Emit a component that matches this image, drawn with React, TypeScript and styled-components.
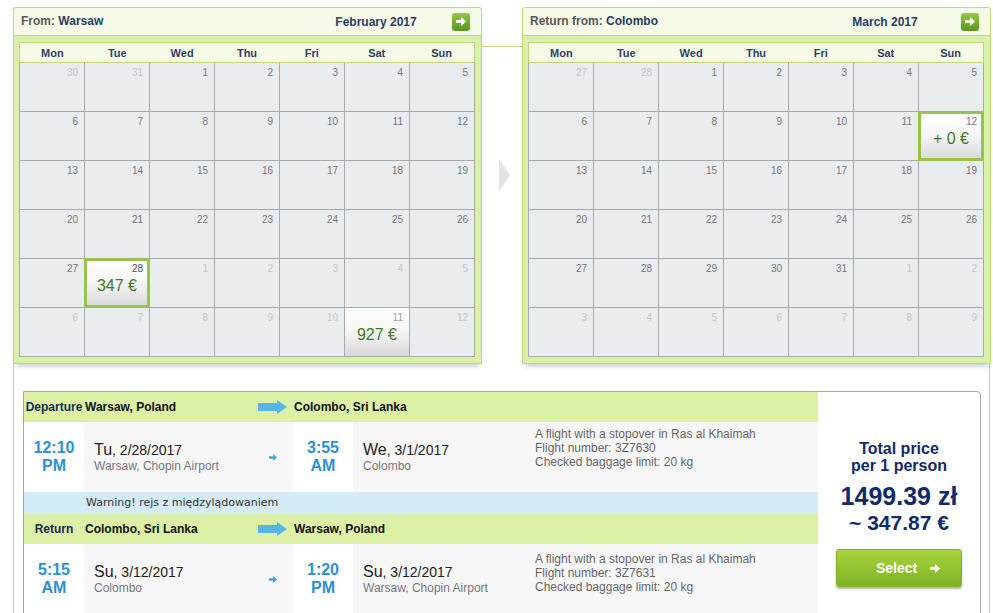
import React from 'react';
import styled, { createGlobalStyle } from 'styled-components';

const GlobalStyle = createGlobalStyle`
  html, body { margin: 0; padding: 0; background: #fff; }
  body { font-family: "Liberation Sans", Arial, sans-serif; overflow: hidden; }
  * { box-sizing: border-box; }
`;

const GREEN_LINE = '#bcd97d';
const NAVY = '#112a6b';

const Page = styled.div`
  width: 993px;
  height: 613px;
  overflow: hidden;
  padding-top: 7px;
`;

const CalendarsRow = styled.div`
  display: flex;
  padding-left: 13px;
  position: relative;
  z-index: 1;
`;

const Calendar = styled.section`
  width: 469px;
  border: 1px solid ${GREEN_LINE};
  border-radius: 3px 3px 0 0;
  background: #dcf1a8;
  box-shadow: 0 5px 5px -3px rgba(0, 0, 0, 0.22);
`;

const CalHeader = styled.header`
  height: 28px;
  display: flex;
  align-items: center;
  padding: 0 11px 0 7px;
  background: #f6fbe8;
  border-bottom: 1px solid ${GREEN_LINE};
  border-radius: 3px 3px 0 0;
  font-size: 12px;
  font-weight: bold;
`;

const CalTitle = styled.div`
  flex: 1;
  color: #585858;
  margin-top: -2px;
`;

const CalCity = styled.span`
  color: #2b3b63;
`;

const CalMonth = styled.div`
  width: 100px;
  margin-right: 26px;
  text-align: center;
  color: #2b3b63;
  margin-top: 1px;
`;

const NextButton = styled.div`
  width: 18px;
  height: 18px;
  border-radius: 3px;
  background: linear-gradient(#94c944, #5a961f);
  display: flex;
  align-items: center;
  justify-content: center;
`;

const CalBody = styled.div`
  padding: 6px 6px 6px 5px;
`;

const Weekdays = styled.div`
  display: grid;
  grid-template-columns: repeat(7, 1fr);
  width: 456px;
  height: 21px;
  border: 1px solid ${GREEN_LINE};
  background: #f5fbe6;
  align-items: center;
`;

const Weekday = styled.div`
  text-align: center;
  font-size: 11px;
  font-weight: bold;
  color: #2e3f66;
`;

const Grid = styled.div`
  display: grid;
  grid-template-columns: repeat(7, 65px);
  border-left: 1px solid #a9a9a9;
  background: #eaedf0;
`;

const DayCell = styled.div<{ $price?: boolean; $selected?: boolean }>`
  position: relative;
  height: 49px;
  border-right: 1px solid #a9a9a9;
  border-bottom: 1px solid #a9a9a9;
  display: flex;
  flex-direction: column;
  background: ${(p) => (p.$price ? 'linear-gradient(#ffffff 0%, #f7f7f7 45%, #d9d9d9 100%)' : 'transparent')};
  ${(p) =>
    p.$selected &&
    `&::after {
      content: '';
      position: absolute;
      top: -1px; left: -1px; right: -1px; bottom: -1px;
      border: 3px solid #97c44c;
    }`}
`;

const DayNum = styled.div<{ $tone: 'muted' | 'normal' | 'dark' | 'mid' }>`
  text-align: right;
  padding: 3px 6px 0 0;
  font-size: 10px;
  line-height: 13px;
  color: ${(p) =>
    p.$tone === 'muted' ? '#c4c6c8' : p.$tone === 'dark' ? '#555' : p.$tone === 'mid' ? '#a0a0a0' : '#777'};
`;

const CellPrice = styled.div`
  margin-top: 2px;
  text-align: center;
  font-size: 16px;
  line-height: 18px;
  color: #43791c;
`;

const Connector = styled.div`
  flex: 0 0 40px;
  display: flex;
  flex-direction: column;
`;

const ConnectorLine = styled.div`
  height: 1px;
  margin-top: 39px;
  background: ${GREEN_LINE};
`;

const NextTriangle = styled.div`
  margin: 112px 0 0 17px;
  width: 0;
  height: 0;
  border-left: 11px solid #e0e4e8;
  border-top: 16px solid transparent;
  border-bottom: 16px solid transparent;
`;

const Lower = styled.div`
  margin-left: 13px;
  width: 977px;
  height: 260px;
  border-left: 1px solid ${GREEN_LINE};
  border-right: 1px solid ${GREEN_LINE};
  padding: 27px 8px 0 9px;
`;

const Card = styled.div`
  display: flex;
  border: 1px solid #a8a8a8;
  border-radius: 0 4px 0 0;
  background: #fff;
`;

const Legs = styled.div`
  width: 794px;
  display: flex;
  flex-direction: column;
`;

const LegHeader = styled.div`
  display: grid;
  grid-template-columns: 60px 209px 1fr;
  height: 30px;
  align-items: center;
  background: #dcf0a6;
  font-size: 12px;
  font-weight: bold;
  color: #111;
`;

const LegLabel = styled.div`
  text-align: center;
  color: #1a2b52;
`;

const LegFrom = styled.div`
  display: flex;
  align-items: center;
  justify-content: space-between;
  padding: 0 6px 0 1px;
`;

const LegTo = styled.div`
  padding-left: 1px;
`;

const LegRow = styled.div`
  display: grid;
  grid-template-columns: 60px 209px 60px 172px 1fr;
  height: 70px;
  background: #f7f7f7;
`;

const TimeCell = styled.div`
  background: #fff;
  color: #2d8fd5;
  font-size: 16px;
  font-weight: bold;
  line-height: 18px;
  display: flex;
  flex-direction: column;
  align-items: center;
  justify-content: center;
`;

const DateCell = styled.div<{ $arrow?: boolean }>`
  display: flex;
  align-items: center;
  justify-content: space-between;
  padding: 0 ${(p) => (p.$arrow ? '16px' : '0')} 0 10px;
`;

const DateBlock = styled.div`
  display: flex;
  flex-direction: column;
`;

const DateLine = styled.div`
  font-size: 14px;
  line-height: 18px;
  color: #222;
`;

const DayName = styled.span`
  font-size: 16px;
`;

const Place = styled.div`
  font-size: 12px;
  line-height: 14px;
  color: #777;
`;

const InfoCell = styled.div<{ $top: number }>`
  padding: ${(p) => p.$top}px 0 0 10px;
  font-size: 12px;
  line-height: 14px;
  color: #666;
`;

const Warning = styled.div`
  height: 22px;
  line-height: 22px;
  padding-left: 62px;
  background: #d4ebf8;
  font-family: "DejaVu Sans", Verdana, sans-serif;
  font-size: 11px;
  color: #333;
`;

const PriceCol = styled.div`
  flex: 1;
  display: flex;
  flex-direction: column;
  align-items: center;
  padding-top: 48px;
  text-align: center;
  color: ${NAVY};
  font-weight: bold;
`;

const PriceLabel = styled.div`
  font-size: 16px;
  line-height: 17px;
`;

const PriceMain = styled.div`
  margin-top: 8px;
  font-size: 25px;
  line-height: 28px;
`;

const PriceEuro = styled.div`
  margin-top: 1px;
  font-size: 21px;
  line-height: 24px;
`;

const SelectButton = styled.button`
  margin-top: 14px;
  width: 126px;
  height: 38px;
  border: 1px solid #84b02f;
  border-radius: 3px;
  background: linear-gradient(#aad43f, #7fb224);
  box-shadow: 0 2px 2px rgba(0, 0, 0, 0.3);
  color: #fff;
  font-family: "Liberation Sans", Arial, sans-serif;
  font-size: 14px;
  font-weight: bold;
  display: flex;
  align-items: center;
  justify-content: center;
  gap: 13px;
  padding: 0 0 0 18px;
  cursor: pointer;
`;

const ArrowIcon = ({ w, h, color }: { w: number; h: number; color: string }) => (
  <svg width={w} height={h} viewBox="0 0 10 9" preserveAspectRatio="none">
    <path d="M0 3h5.2V0L10 4.5 5.2 9V6H0z" fill={color} />
  </svg>
);

const BigArrow = () => (
  <svg width="29" height="14" viewBox="0 0 29 14">
    <path d="M0 3h19V0l10 7-10 7v-3H0z" fill="#56b6e5" />
  </svg>
);

type Day = { n: number; tone: 'muted' | 'normal' | 'dark' | 'mid'; price?: string; selected?: boolean };

const buildMonth = (
  rows: number[][],
  muted: (r: number, c: number) => boolean,
  special: Record<string, { price: string; selected?: boolean; tone: Day['tone'] }>
): Day[][] =>
  rows.map((row, r) =>
    row.map((n, c) => {
      const s = special[`${r}-${c}`];
      if (s) return { n, tone: s.tone, price: s.price, selected: s.selected };
      return { n, tone: muted(r, c) ? 'muted' : 'normal' };
    })
  );

const range = (a: number, b: number) => Array.from({ length: b - a + 1 }, (_, i) => a + i);

const febRows = [
  [30, 31, 1, 2, 3, 4, 5],
  range(6, 12),
  range(13, 19),
  range(20, 26),
  [27, 28, 1, 2, 3, 4, 5],
  range(6, 12),
];

const marRows = [
  [27, 28, 1, 2, 3, 4, 5],
  range(6, 12),
  range(13, 19),
  range(20, 26),
  [27, 28, 29, 30, 31, 1, 2],
  range(3, 9),
];

const february = buildMonth(
  febRows,
  (r, c) => (r === 0 && c < 2) || (r === 4 && c > 1) || r === 5,
  {
    '4-1': { price: '347 €', selected: true, tone: 'dark' },
    '5-5': { price: '927 €', tone: 'mid' },
  }
);

const march = buildMonth(
  marRows,
  (r, c) => (r === 0 && c < 2) || (r === 4 && c > 4) || r === 5,
  {
    '1-6': { price: '+ 0 €', selected: true, tone: 'normal' },
  }
);

const WEEKDAYS = ['Mon', 'Tue', 'Wed', 'Thu', 'Fri', 'Sat', 'Sun'];

const MonthCalendar = ({ label, city, month, days }: { label: string; city: string; month: string; days: Day[][] }) => (
  <Calendar>
    <CalHeader>
      <CalTitle>
        {label} <CalCity>{city}</CalCity>
      </CalTitle>
      <CalMonth>{month}</CalMonth>
      <NextButton>
        <ArrowIcon w={10} h={9} color="#fff" />
      </NextButton>
    </CalHeader>
    <CalBody>
      <Weekdays>
        {WEEKDAYS.map((d) => (
          <Weekday key={d}>{d}</Weekday>
        ))}
      </Weekdays>
      <Grid>
        {days.flat().map((d, i) => (
          <DayCell key={i} $price={!!d.price} $selected={d.selected}>
            <DayNum $tone={d.tone}>{d.n}</DayNum>
            {d.price && <CellPrice>{d.price}</CellPrice>}
          </DayCell>
        ))}
      </Grid>
    </CalBody>
  </Calendar>
);

type Leg = {
  label: string;
  from: string;
  to: string;
  dep: [string, string];
  depDay: string;
  depDate: string;
  depPlace: string;
  arr: [string, string];
  arrDay: string;
  arrDate: string;
  arrPlace: string;
  flight: string;
  infoTop: number;
};

const legs: Leg[] = [
  {
    label: 'Departure',
    from: 'Warsaw, Poland',
    to: 'Colombo, Sri Lanka',
    dep: ['12:10', 'PM'],
    depDay: 'Tu',
    depDate: '2/28/2017',
    depPlace: 'Warsaw, Chopin Airport',
    arr: ['3:55', 'AM'],
    arrDay: 'We',
    arrDate: '3/1/2017',
    arrPlace: 'Colombo',
    flight: '3Z7630',
    infoTop: 5,
  },
  {
    label: 'Return',
    from: 'Colombo, Sri Lanka',
    to: 'Warsaw, Poland',
    dep: ['5:15', 'AM'],
    depDay: 'Su',
    depDate: '3/12/2017',
    depPlace: 'Colombo',
    arr: ['1:20', 'PM'],
    arrDay: 'Su',
    arrDate: '3/12/2017',
    arrPlace: 'Warsaw, Chopin Airport',
    flight: '3Z7631',
    infoTop: 8,
  },
];

const LegView = ({ leg }: { leg: Leg }) => (
  <>
    <LegHeader>
      <LegLabel>{leg.label}</LegLabel>
      <LegFrom>
        <span>{leg.from}</span>
        <BigArrow />
      </LegFrom>
      <LegTo>{leg.to}</LegTo>
    </LegHeader>
    <LegRow>
      <TimeCell>
        <div>{leg.dep[0]}</div>
        <div>{leg.dep[1]}</div>
      </TimeCell>
      <DateCell $arrow>
        <DateBlock>
          <DateLine>
            <DayName>{leg.depDay}</DayName>, {leg.depDate}
          </DateLine>
          <Place>{leg.depPlace}</Place>
        </DateBlock>
        <ArrowIcon w={8} h={7} color="#45a6df" />
      </DateCell>
      <TimeCell>
        <div>{leg.arr[0]}</div>
        <div>{leg.arr[1]}</div>
      </TimeCell>
      <DateCell>
        <DateBlock>
          <DateLine>
            <DayName>{leg.arrDay}</DayName>, {leg.arrDate}
          </DateLine>
          <Place>{leg.arrPlace}</Place>
        </DateBlock>
      </DateCell>
      <InfoCell $top={leg.infoTop}>
        <div>A flight with a stopover in Ras al Khaimah</div>
        <div>Flight number: {leg.flight}</div>
        <div>Checked baggage limit: 20 kg</div>
      </InfoCell>
    </LegRow>
  </>
);

export default function App() {
  return (
    <Page>
      <GlobalStyle />
      <CalendarsRow>
        <MonthCalendar label="From:" city="Warsaw" month="February 2017" days={february} />
        <Connector>
          <ConnectorLine />
          <NextTriangle />
        </Connector>
        <MonthCalendar label="Return from:" city="Colombo" month="March 2017" days={march} />
      </CalendarsRow>
      <Lower>
        <Card>
          <Legs>
            <LegView leg={legs[0]} />
            <Warning>Warning! rejs z międzylądowaniem</Warning>
            <LegView leg={legs[1]} />
          </Legs>
          <PriceCol>
            <PriceLabel>Total price</PriceLabel>
            <PriceLabel>per 1 person</PriceLabel>
            <PriceMain>1499.39 zł</PriceMain>
            <PriceEuro>~ 347.87 €</PriceEuro>
            <SelectButton>
              Select
              <ArrowIcon w={10} h={9} color="#fff" />
            </SelectButton>
          </PriceCol>
        </Card>
      </Lower>
    </Page>
  );
}
